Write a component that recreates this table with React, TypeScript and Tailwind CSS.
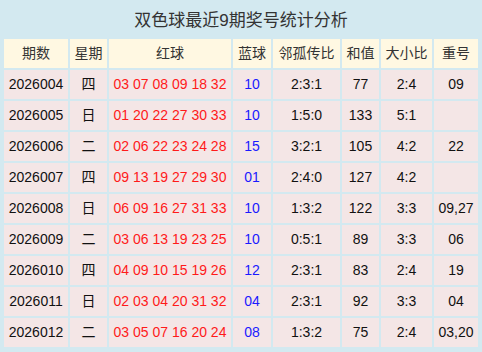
import React from 'react';

const rows = [
  ['2026004', '四', '03 07 08 09 18 32', '10', '2:3:1', '77', '2:4', '09'],
  ['2026005', '日', '01 20 22 27 30 33', '10', '1:5:0', '133', '5:1', ''],
  ['2026006', '二', '02 06 22 23 24 28', '15', '3:2:1', '105', '4:2', '22'],
  ['2026007', '四', '09 13 19 27 29 30', '01', '2:4:0', '127', '4:2', ''],
  ['2026008', '日', '06 09 16 27 31 33', '10', '1:3:2', '122', '3:3', '09,27'],
  ['2026009', '二', '03 06 13 19 23 25', '10', '0:5:1', '89', '3:3', '06'],
  ['2026010', '四', '04 09 10 15 19 26', '12', '2:3:1', '83', '2:4', '19'],
  ['2026011', '日', '02 03 04 20 31 32', '04', '2:3:1', '92', '3:3', '04'],
  ['2026012', '二', '03 05 07 16 20 24', '08', '1:3:2', '75', '2:4', '03,20'],
];

const headers = ['期数', '星期', '红球', '蓝球', '邻孤传比', '和值', '大小比', '重号'];

export default function App() {
  return (
    <div
      className="w-[482px] h-[352px] bg-[#d3e9f0] px-[4px] pb-[5px]"
      style={{ fontFamily: '"Liberation Sans", "Noto Sans CJK SC", sans-serif' }}
    >
      {/* 标题 */}
      <div className="h-[39px] flex items-center justify-center text-[17px] text-[#333] pt-[2px]">
        双色球最近9期奖号统计分析
      </div>

      {/* 表格 */}
      <div className="grid grid-cols-[64px_37px_122px_38px_67px_37px_51px_44px] auto-rows-[29px] gap-[2px] text-[14px]">
        {headers.map((h) => (
          <div key={h} className="bg-[#fff8e2] text-[#333] flex items-center justify-center">
            {h}
          </div>
        ))}
        {rows.map((r) =>
          r.map((c, i) => (
            <div
              key={r[0] + i}
              className={`bg-[#f4e6e6] flex items-center justify-center ${
                i === 2 ? 'text-[#ff1a1a]' : i === 3 ? 'text-[#1a1aff]' : 'text-[#111]'
              }`}
            >
              {c}
            </div>
          ))
        )}
      </div>
    </div>
  );
}
